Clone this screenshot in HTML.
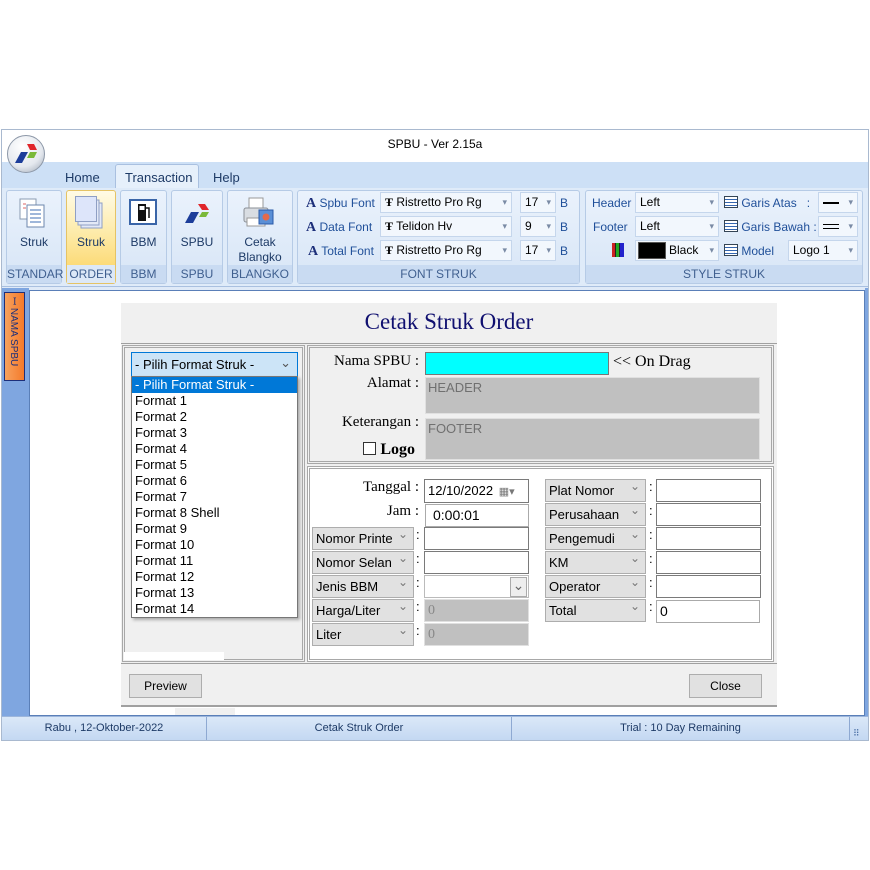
<!DOCTYPE html>
<html><head><meta charset="utf-8"><style>
*{box-sizing:border-box;margin:0;padding:0}
body{width:870px;height:870px;background:#fff;position:relative;overflow:hidden;font-family:"Liberation Sans",sans-serif;font-size:12px;color:#000}
.a{position:absolute}
.grp{position:absolute;top:190px;height:94px;border:1px solid #b6cbe6;border-radius:3px;background:linear-gradient(#eaf2fc,#d7e5f6)}
.gl{position:absolute;left:0;right:0;bottom:0;height:18px;background:#c9dbf2;color:#3f5f8f;text-align:center;font-size:12px;line-height:18px}
.bl{position:absolute;left:0;right:0;top:44px;text-align:center;color:#1d3a66;font-size:12px;line-height:15px}
.rl{position:absolute;color:#1f4f99;font-size:12px}
.cb{position:absolute;height:21px;background:#f2f7fd;border:1px solid #c5d6ec;font-size:12px;line-height:19px;padding-left:4px;color:#000}
.cb:after{content:"▾";position:absolute;right:4px;top:0;color:#7a8ba5;font-size:9px}
.ser{font-family:"Liberation Serif",serif}
.lab{position:absolute;font-family:"Liberation Serif",serif;font-size:15px;text-align:right}
.dd{position:absolute;height:23px;background:#e1e1e1;border:1px solid #adadad;font-size:13px;line-height:21px;padding-left:3px}
.dd:after{content:"⌄";position:absolute;right:5px;top:-4px;color:#777;font-size:12px}
.in{position:absolute;height:23px;background:#fff;border:1px solid #7a7a7a;font-size:14px;line-height:21px;padding-left:3px}
.col{position:absolute;font-size:13px}
.li{height:16px;line-height:16px;padding-left:3px;font-size:13px}
</style></head><body>
<div class="a" style="left:1px;top:129px;width:868px;height:612px;border:1px solid #a9b9cf;background:#dfeaf8"></div>
<div class="a" style="left:2px;top:130px;width:866px;height:32px;background:#fff"></div>
<div class="a" style="left:0;top:137px;width:870px;text-align:center;font-size:12px">SPBU - Ver 2.15a</div>
<div class="a" style="left:2px;top:162px;width:866px;height:26px;background:#cde0f6"></div>
<div class="a" style="left:7px;top:135px;width:38px;height:38px;border-radius:50%;background:radial-gradient(circle at 40% 30%,#fff,#e4e8ee 60%,#9aa5b4);border:1px solid #8d98a8"></div>
<svg class="a" style="left:13px;top:143px" width="26" height="22"><polygon points="14,1 21,1 24,7 17,7" fill="#e0262b"/><polygon points="8,9 15,9 9,20 2,20" fill="#1c3d9a"/><polygon points="17,9 24,9 21,15 14,15" fill="#7ab939"/></svg>
<div class="a" style="left:65px;top:170px;font-size:13px;color:#1d3a66">Home</div>
<div class="a" style="left:115px;top:164px;width:84px;height:26px;background:#e6f0fb;border:1px solid #a9c0e0;border-bottom:none;border-radius:3px 3px 0 0"></div>
<div class="a" style="left:125px;top:170px;font-size:13px;color:#1d3a66">Transaction</div>
<div class="a" style="left:213px;top:170px;font-size:13px;color:#1d3a66">Help</div>
<div class="a" style="left:2px;top:188px;width:866px;height:99px;background:#dfebf9;border-bottom:1px solid #a9c0e0"></div>
<div class="grp" style="left:6px;width:56px"><div class="bl">Struk</div><div class="gl">STANDAR</div></div>
<svg class="a" style="left:18px;top:197px" width="30" height="32"><rect x="2" y="2" width="16" height="20" fill="#fff" stroke="#8a9bb2"/><rect x="9" y="8" width="17" height="22" fill="#fff" stroke="#6d87ad"/><g stroke="#3f6fb5"><line x1="12" y1="13" x2="23" y2="13"/><line x1="12" y1="17" x2="23" y2="17"/><line x1="12" y1="21" x2="23" y2="21"/><line x1="12" y1="25" x2="23" y2="25"/></g><g stroke="#d66"><line x1="5" y1="7" x2="8" y2="7"/><line x1="5" y1="11" x2="8" y2="11"/></g></svg>
<div class="grp" style="left:66px;width:50px;background:linear-gradient(#fffbe6,#fde9a3 50%,#fcd25e);border-color:#e5c365"><div class="bl">Struk</div><div class="gl" style="background:#dce8f7">ORDER</div></div>
<svg class="a" style="left:75px;top:196px" width="30" height="34"><rect x="6" y="7" width="21" height="25" fill="#e3e9f7" stroke="#8f9fc4"/><rect x="3" y="4" width="21" height="25" fill="#e3e9f7" stroke="#8f9fc4"/><rect x="0.5" y="0.5" width="21" height="25" fill="#dde5fa" stroke="#8f9fc4"/></svg>
<div class="grp" style="left:120px;width:47px"><div class="bl">BBM</div><div class="gl">BBM</div></div>
<svg class="a" style="left:129px;top:199px" width="28" height="26"><rect x="1" y="1" width="26" height="24" fill="#fff" stroke="#3a65a8" stroke-width="2"/><rect x="9" y="5" width="8" height="17" fill="#111"/><rect x="10.5" y="7" width="5" height="4" fill="#fff"/><path d="M17 9 h3 v10" stroke="#111" stroke-width="1.5" fill="none"/></svg>
<div class="grp" style="left:171px;width:52px"><div class="bl">SPBU</div><div class="gl">SPBU</div></div>
<svg class="a" style="left:183px;top:203px" width="28" height="22"><polygon points="15,1 22,1 26,7 19,7" fill="#e0262b"/><polygon points="8,9 16,9 10,20 2,20" fill="#1c3d9a"/><polygon points="19,9 26,9 23,14 16,14" fill="#7ab939"/></svg>
<div class="grp" style="left:227px;width:66px"><div class="bl">Cetak<br>Blangko</div><div class="gl">BLANGKO</div></div>
<svg class="a" style="left:241px;top:196px" width="36" height="36"><rect x="8" y="2" width="14" height="10" fill="#fff" stroke="#999"/><rect x="3" y="12" width="24" height="14" rx="2" fill="#d9dde2" stroke="#8a8f96"/><rect x="6" y="22" width="18" height="8" fill="#fff" stroke="#999"/><rect x="18" y="14" width="14" height="14" fill="#5a8fd6" stroke="#2a5aa8"/><circle cx="25" cy="21" r="3.5" fill="#e36a4b"/></svg>
<div class="grp" style="left:297px;width:283px"><div class="gl">FONT STRUK</div></div>
<div class="grp" style="left:585px;width:278px"><div class="gl">STYLE STRUK</div></div>
<div class="rl" style="left:306px;top:196px"><b class="ser" style="font-size:14px;color:#1d2f7a">A</b> Spbu Font</div>
<div class="rl" style="left:306px;top:220px"><b class="ser" style="font-size:14px;color:#1d2f7a">A</b> Data Font</div>
<div class="rl" style="left:308px;top:244px"><b class="ser" style="font-size:14px;color:#1d2f7a">A</b> Total Font</div>
<div class="cb" style="left:380px;top:192px;width:132px"><b class="ser">Ŧ</b> Ristretto Pro Rg</div>
<div class="cb" style="left:380px;top:216px;width:132px"><b class="ser">Ŧ</b> Telidon Hv</div>
<div class="cb" style="left:380px;top:240px;width:132px"><b class="ser">Ŧ</b> Ristretto Pro Rg</div>
<div class="cb" style="left:520px;top:192px;width:36px">17</div>
<div class="cb" style="left:520px;top:216px;width:36px">9</div>
<div class="cb" style="left:520px;top:240px;width:36px">17</div>
<div class="rl" style="left:560px;top:196px">B</div><div class="rl" style="left:560px;top:220px">B</div><div class="rl" style="left:560px;top:244px">B</div>
<div class="rl" style="left:592px;top:196px">Header</div>
<div class="rl" style="left:593px;top:220px">Footer</div>
<div class="a" style="left:612px;top:243px;width:12px;height:14px;background:linear-gradient(90deg,#c22 0 3px,#222 3px 4px,#2a2 4px 7px,#222 7px 8px,#22c 8px 11px)"></div>
<div class="cb" style="left:635px;top:192px;width:84px">Left</div>
<div class="cb" style="left:635px;top:216px;width:84px">Left</div>
<div class="cb" style="left:635px;top:240px;width:84px"><span style="display:inline-block;width:28px;height:17px;background:#000;vertical-align:top;margin:1px 3px 0 -2px;border:1px solid #555"></span>Black</div>
<div class="rl" style="left:724px;top:196px"><span style="display:inline-block;width:14px;height:12px;border:1px solid #345;background:repeating-linear-gradient(#fff 0 2px,#3466b0 2px 3px);vertical-align:-1px"></span> Garis Atas &nbsp; :</div>
<div class="rl" style="left:724px;top:220px"><span style="display:inline-block;width:14px;height:12px;border:1px solid #345;background:repeating-linear-gradient(#fff 0 2px,#3466b0 2px 3px);vertical-align:-1px"></span> Garis Bawah :</div>
<div class="rl" style="left:724px;top:244px"><span style="display:inline-block;width:14px;height:12px;border:1px solid #345;background:repeating-linear-gradient(#fff 0 2px,#3466b0 2px 3px);vertical-align:-1px"></span> Model</div>
<div class="cb" style="left:818px;top:192px;width:40px"><span style="display:inline-block;width:16px;border-top:2px solid #000;vertical-align:middle"></span></div>
<div class="cb" style="left:818px;top:216px;width:40px"><span style="display:inline-block;width:16px;height:5px;border-top:1px solid #000;border-bottom:1px solid #000;vertical-align:middle"></span></div>
<div class="cb" style="left:788px;top:240px;width:70px">Logo 1</div>
<div class="a" style="left:2px;top:288px;width:27px;height:428px;background:#7fa6e0"></div>
<div class="a" style="left:4px;top:292px;width:21px;height:89px;background:linear-gradient(90deg,#f7a25e,#f47a2b);border:1px solid #1d2f7a"></div>
<div class="a" style="left:6px;top:297px;writing-mode:vertical-rl;font-size:10px;color:#1d2f7a">ꟷ NAMA SPBU</div>
<div class="a" style="left:29px;top:290px;width:836px;height:426px;background:#fff;border:1px solid #5a7fb8"></div>
<div class="a" style="left:865px;top:288px;width:3px;height:428px;background:#7fa6e0"></div>
<div class="a" style="left:121px;top:303px;width:656px;height:404px;background:#f0f0f0;border-bottom:2px solid #a0a0a0"></div>
<div class="a ser" style="left:121px;top:309px;width:656px;text-align:center;font-size:23px;color:#101070">Cetak Struk Order</div>
<div class="a" style="left:121px;top:343px;width:656px;height:1px;background:#a0a0a0"></div>
<div class="a" style="left:122px;top:345px;width:183px;height:317px;border:3px double #a8a8a8;background:#f0f0f0"></div>
<div class="a" style="left:124px;top:652px;width:100px;height:8px;background:#fff"></div>
<div class="a" style="left:131px;top:352px;width:167px;height:25px;background:#cce4f7;border:1px solid #0078d7;font-size:13px;line-height:23px;padding-left:3px">- Pilih Format Struk -<span style="position:absolute;right:6px;top:-2px;color:#555">⌄</span></div>
<div class="a" style="left:131px;top:376px;width:167px;height:242px;background:#fff;border:1px solid #777;box-shadow:2px 2px 3px #aaa">
<div class="li" style="background:#0078d7;color:#fff">- Pilih Format Struk -</div>
<div class="li">Format 1</div><div class="li">Format 2</div><div class="li">Format 3</div><div class="li">Format 4</div><div class="li">Format 5</div><div class="li">Format 6</div><div class="li">Format 7</div><div class="li">Format 8 Shell</div><div class="li">Format 9</div><div class="li">Format 10</div><div class="li">Format 11</div><div class="li">Format 12</div><div class="li">Format 13</div><div class="li">Format 14</div></div>
<div class="a" style="left:307px;top:345px;width:467px;height:119px;border:3px double #a8a8a8"></div>
<div class="lab" style="left:300px;top:353px;width:119px">Nama SPBU :</div>
<div class="a" style="left:425px;top:352px;width:184px;height:23px;background:#00ffff;border:1px solid #777"></div>
<div class="a ser" style="left:613px;top:353px;font-size:16px">&lt;&lt; On Drag</div>
<div class="lab" style="left:300px;top:375px;width:119px">Alamat :</div>
<div class="a" style="left:425px;top:377px;width:335px;height:37px;background:#c0c0c0;border:1px solid #e0e0e0;color:#707070;font-size:13px;padding:2px 2px">HEADER</div>
<div class="lab" style="left:300px;top:414px;width:119px">Keterangan :</div>
<div class="a" style="left:425px;top:418px;width:335px;height:42px;background:#c0c0c0;border:1px solid #e0e0e0;color:#707070;font-size:13px;padding:2px 2px">FOOTER</div>
<div class="lab" style="left:300px;top:441px;width:115px;font-weight:bold;font-size:16px"><span style="display:inline-block;width:13px;height:13px;border:1px solid #333;background:#fff;vertical-align:-1px"></span> Logo</div>
<div class="a" style="left:307px;top:466px;width:467px;height:196px;border:3px double #a8a8a8;background:#fff"></div>
<div class="lab" style="left:300px;top:479px;width:119px">Tanggal :</div>
<div class="in" style="left:424px;top:479px;width:105px;height:24px;font-size:13px">12/10/2022 <span style="color:#777;font-size:11px;margin-left:2px">▦▾</span></div>
<div class="lab" style="left:300px;top:503px;width:119px">Jam :</div>
<div class="in" style="left:425px;top:504px;width:104px;padding-left:7px;border-color:#aaa">0:00:01</div>
<div class="dd" style="left:312px;top:527px;width:102px">Nomor Printe</div><div class="col" style="left:416px;top:527px">:</div><div class="in" style="left:424px;top:527px;width:105px"></div>
<div class="dd" style="left:312px;top:551px;width:102px">Nomor Selan</div><div class="col" style="left:416px;top:551px">:</div><div class="in" style="left:424px;top:551px;width:105px"></div>
<div class="dd" style="left:312px;top:575px;width:102px">Jenis BBM</div><div class="col" style="left:416px;top:575px">:</div><div class="in" style="left:424px;top:575px;width:105px;border-color:#bbb"><span style="position:absolute;right:1px;top:1px;width:17px;height:20px;border:1px solid #aaa;background:#eee;color:#666;text-align:center;line-height:14px">⌄</span></div>
<div class="dd" style="left:312px;top:599px;width:102px">Harga/Liter</div><div class="col" style="left:416px;top:599px">:</div><div class="in" style="left:424px;top:599px;width:105px;background:#c0c0c0;border-color:#e0e0e0;color:#888;font-family:'Liberation Serif',serif">0</div>
<div class="dd" style="left:312px;top:623px;width:102px">Liter</div><div class="col" style="left:416px;top:623px">:</div><div class="in" style="left:424px;top:623px;width:105px;background:#c0c0c0;border-color:#e0e0e0;color:#888;font-family:'Liberation Serif',serif">0</div>
<div class="dd" style="left:545px;top:479px;width:101px">Plat Nomor</div><div class="col" style="left:649px;top:479px">:</div><div class="in" style="left:656px;top:479px;width:105px"></div>
<div class="dd" style="left:545px;top:503px;width:101px">Perusahaan</div><div class="col" style="left:649px;top:503px">:</div><div class="in" style="left:656px;top:503px;width:105px"></div>
<div class="dd" style="left:545px;top:527px;width:101px">Pengemudi</div><div class="col" style="left:649px;top:527px">:</div><div class="in" style="left:656px;top:527px;width:105px"></div>
<div class="dd" style="left:545px;top:551px;width:101px">KM</div><div class="col" style="left:649px;top:551px">:</div><div class="in" style="left:656px;top:551px;width:105px"></div>
<div class="dd" style="left:545px;top:575px;width:101px">Operator</div><div class="col" style="left:649px;top:575px">:</div><div class="in" style="left:656px;top:575px;width:105px"></div>
<div class="dd" style="left:545px;top:599px;width:101px">Total</div><div class="col" style="left:649px;top:599px">:</div><div class="in" style="left:656px;top:600px;width:104px;border-color:#aaa">0</div>
<div class="a" style="left:121px;top:663px;width:656px;height:1px;background:#a0a0a0"></div>
<div class="a" style="left:129px;top:674px;width:73px;height:24px;background:#e1e1e1;border:1px solid #adadad;text-align:center;line-height:22px">Preview</div>
<div class="a" style="left:689px;top:674px;width:73px;height:24px;background:#e1e1e1;border:1px solid #adadad;text-align:center;line-height:22px">Close</div>
<div class="a" style="left:175px;top:708px;width:60px;height:7px;background:#f0f0f0"></div>
<div class="a" style="left:2px;top:716px;width:866px;height:24px;background:linear-gradient(#dbe8f8,#c4d8f2);border-top:1px solid #9db6dc"></div>
<div class="a" style="left:206px;top:717px;width:1px;height:23px;background:#8ea9d2"></div>
<div class="a" style="left:511px;top:717px;width:1px;height:23px;background:#8ea9d2"></div>
<div class="a" style="left:849px;top:717px;width:1px;height:23px;background:#8ea9d2"></div>
<div class="a" style="left:2px;top:722px;width:204px;text-align:center;font-size:11px;color:#1d3a66">Rabu , 12-Oktober-2022</div>
<div class="a" style="left:207px;top:722px;width:304px;text-align:center;font-size:11px;color:#1d3a66">Cetak Struk Order</div>
<div class="a" style="left:512px;top:722px;width:337px;text-align:center;font-size:11px;color:#1d3a66">Trial : 10 Day Remaining</div>
<div class="a" style="left:853px;top:728px;font-size:9px;color:#4a6fa5">⠿</div>
</body></html>
